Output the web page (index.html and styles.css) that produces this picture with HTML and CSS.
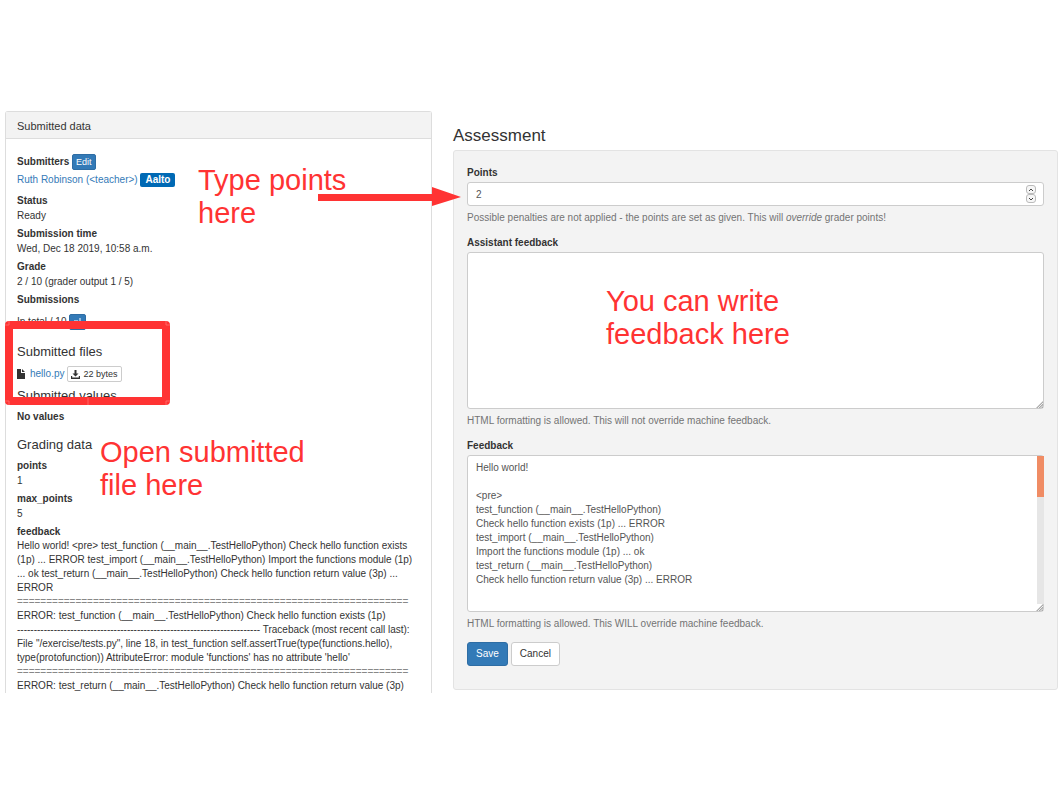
FILE: index.html
```html
<!DOCTYPE html>
<html lang="en">
<head>
<meta charset="utf-8">
<title>Assess submission</title>
<link rel="stylesheet" href="styles.css">
</head>
<body>
<div class="page">
  <section class="panel">
    <h2 class="panel-heading">Submitted data</h2>
    <div class="panel-body">
      <dl class="facts">
        <dt class="with-button">Submitters <button type="button" class="btn primary tiny">Edit</button></dt>
        <dd class="submitter"><a href="#user">Ruth Robinson (&lt;teacher&gt;)</a> <span class="tag">Aalto</span></dd>
        <dt>Status</dt>
        <dd>Ready</dd>
        <dt>Submission time</dt>
        <dd>Wed, Dec 18 2019, 10:58 a.m.</dd>
        <dt>Grade</dt>
        <dd>2 / 10 (grader output 1 / 5)</dd>
        <dt>Submissions</dt>
        <dd class="total">In total / 10 <button type="button" class="btn primary tiny" aria-label="Show submissions"><svg width="9" height="9" viewBox="0 0 9 9"><path d="M1 5h4M7 2v6M5.500 6.500 7 8l1.500-1.500" fill="none" stroke="#fff"/></svg></button></dd>
      </dl>
      <h3 class="section-title">Submitted files</h3>
      <p class="file">
        <svg class="file-icon" width="8" height="10" viewBox="0 0 8 10"><path d="M0 0h4v4h4v6H0zM5 0l3 3H5z" fill="#333"/></svg>
        <a href="#hello">hello.py</a>
        <button type="button" class="btn tiny download"><svg width="9" height="9" viewBox="0 0 9 9"><path d="M3.500 0h2v3.500h2L4.500 6.500l-3-3h2zM0 6h1.200v1.500h6.600V6H9v3H0z" fill="#333"/></svg>22 bytes</button>
      </p>
      <h3 class="section-title">Submitted values</h3>
      <p class="none">No values</p>
      <h3 class="section-title grading">Grading data</h3>
      <dl class="facts">
        <dt>points</dt>
        <dd>1</dd>
        <dt>max_points</dt>
        <dd>5</dd>
        <dt>feedback</dt>
        <dd class="log">Hello world! &lt;pre&gt; test_function (__main__.TestHelloPython) Check hello function exists<br>(1p) ... ERROR test_import (__main__.TestHelloPython) Import the functions module (1p)<br>... ok test_return (__main__.TestHelloPython) Check hello function return value (3p) ...<br>ERROR<br><span class="rule">===================================================================</span><br>ERROR: test_function (__main__.TestHelloPython) Check hello function exists (1p)<br>------------------------------------------------------------------------- Traceback (most recent call last):<br>File "/exercise/tests.py", line 18, in test_function self.assertTrue(type(functions.hello),<br>type(protofunction)) AttributeError: module 'functions' has no attribute 'hello'<br><span class="rule">===================================================================</span><br>ERROR: test_return (__main__.TestHelloPython) Check hello function return value (3p)</dd>
      </dl>
    </div>
  </section>

  <section class="assessment">
    <h1 class="title">Assessment</h1>
    <form class="well">
      <label for="points">Points</label>
      <div class="control">
        <input id="points" class="field" type="text" inputmode="numeric" value="2">
        <div class="spinner">
          <button type="button" aria-label="Increase"><svg width="6" height="4" viewBox="0 0 6 4"><path d="M1 3l2-2 2 2" fill="none" stroke="#444"/></svg></button>
          <button type="button" aria-label="Decrease"><svg width="6" height="4" viewBox="0 0 6 4"><path d="M1 1l2 2 2-2" fill="none" stroke="#444"/></svg></button>
        </div>
      </div>
      <p class="help">Possible penalties are not applied - the points are set as given. This will <em>override</em> grader points!</p>
      <label for="assistant">Assistant feedback</label>
      <div class="control">
        <textarea id="assistant" class="field area"></textarea>
        <svg class="grip" width="7" height="7" viewBox="0 0 7 7"><path d="M7 0v7H0z" fill="#aaa"/><path d="M2 7l5-5M4.500 7 7 4.500" stroke="#eee"/></svg>
      </div>
      <p class="help">HTML formatting is allowed. This will not override machine feedback.</p>
      <label for="feedback">Feedback</label>
      <div class="control">
        <textarea id="feedback" class="field area">Hello world!

&lt;pre&gt;
test_function (__main__.TestHelloPython)
Check hello function exists (1p) ... ERROR
test_import (__main__.TestHelloPython)
Import the functions module (1p) ... ok
test_return (__main__.TestHelloPython)
Check hello function return value (3p) ... ERROR</textarea>
        <div class="scrollbar"><div class="thumb"></div></div>
        <svg class="grip" width="7" height="7" viewBox="0 0 7 7"><path d="M7 0v7H0z" fill="#aaa"/><path d="M2 7l5-5M4.500 7 7 4.500" stroke="#eee"/></svg>
      </div>
      <p class="help">HTML formatting is allowed. This WILL override machine feedback.</p>
      <div class="actions">
        <button type="submit" class="btn primary">Save</button>
        <button type="button" class="btn">Cancel</button>
      </div>
    </form>
  </section>

  <p class="note note-points">Type points<br>here</p>
  <p class="note note-file">Open submitted<br>file here</p>
  <p class="note note-feedback">You can write<br>feedback here</p>
  <svg class="arrow" width="143" height="20" viewBox="0 0 143 20"><path d="M0 7h114V0l29 10-29 9v-5H0z" fill="#f33"/></svg>
  <svg class="frame" width="166" height="85" viewBox="0 0 166 85">
    <rect x="4" y="4" width="157" height="76" fill="none" stroke="#f33" stroke-width="8" stroke-linejoin="round"/>
    <path d="M0 4h4V0M161 0v4h4M0 80h4v4M161 84v-4h4M83 77v7" fill="none" stroke="#f66" stroke-width="1"/>
  </svg>
</div>
</body>
</html>
```
FILE: styles.css
```css
* { box-sizing: border-box; }
body {
  margin: 0;
  background: #fff;
  color: #333;
  font: 10px/14px "Liberation Sans", Arial, sans-serif;
}
h1, h2, h3, p, dl, dd { margin: 0; font-weight: 400; }
a { color: #337ab7; text-decoration: none; }
button, input, textarea { font: inherit; }

.page {
  position: relative;
  display: grid;
  grid-template-columns: 427fr 605fr;
  column-gap: 21px;
  align-items: start;
  padding: 111px 0 0 5px;
  overflow: hidden;
}

.panel {
  border: 1px solid #ddd;
  border-bottom: 0;
  border-radius: 3px 3px 0 0;
}
.panel-heading {
  padding: 7px 11px 5px;
  border-bottom: 1px solid #ddd;
  background: #f3f3f3;
  font-size: 11px;
  line-height: 14px;
}
.panel-body { padding: 15px 0 0 11px; }

.facts dt { font-weight: 700; line-height: 14px; }
.facts dd { line-height: 15px; margin-bottom: 4px; }
.facts .with-button, .facts .submitter { line-height: 16px; }
.facts .with-button { margin-bottom: 2px; }
.facts .submitter { margin-bottom: 6px; }
.facts .total { padding-top: 7px; margin-bottom: 14px; }
.facts .log { line-height: 14px; margin-bottom: 0; white-space: nowrap; }
.rule { color: #888; }
.tag {
  display: inline-block;
  padding: 0 5px;
  border-radius: 2px;
  background: #0069b4;
  color: #fff;
  font-weight: 700;
  line-height: 14px;
}

.section-title { font-size: 13px; line-height: 16px; }
.file { display: flex; align-items: center; padding: 6px 0; line-height: 14px; }
.file-icon { margin-right: 5px; }
.none { padding-top: 6px; font-weight: 700; }
.grading { padding: 13px 0 6px; }

.btn {
  padding: 4px 8px;
  border: 1px solid #ccc;
  border-radius: 3px;
  background: #fff;
  color: #333;
  line-height: 14px;
}
.primary { border-color: #2e6da4; background: #337ab7; color: #fff; }
.tiny { padding: 0 3px; border-radius: 2px; font-size: 9px; font-weight: 400; line-height: 14px; }
.download { display: flex; align-items: center; gap: 3px; margin-left: 3px; }

.assessment { min-width: 0; }
.title { padding: 15px 0 4px; font-size: 17px; line-height: 20px; }
.well {
  padding: 15px 13px 23px;
  border: 1px solid #e3e3e3;
  border-radius: 3px;
  background: #f3f3f3;
}
.well label { display: block; margin-bottom: 2px; font-weight: 700; line-height: 14px; }
.field {
  display: block;
  width: 100%;
  padding: 5px 8px 3px;
  border: 1px solid #ccc;
  border-radius: 3px;
  background: #fff;
  color: #555;
  line-height: 14px;
  outline: 0;
}
.control { position: relative; margin-bottom: 5px; }
.spinner {
  position: absolute;
  top: 3px;
  right: 8px;
  display: flex;
  flex-direction: column;
}
.spinner button {
  display: flex;
  align-items: center;
  justify-content: center;
  width: 10px;
  height: 9px;
  padding: 0;
  border: 1px solid #bbb;
  border-radius: 3px;
  background: #f6f6f6;
}
.area { height: 157px; resize: none; }
.scrollbar {
  position: absolute;
  top: 1px;
  right: 0;
  bottom: 8px;
  width: 7px;
  background: #e6e6e6;
}
.thumb { height: 28%; background: #f08c64; }
.grip { position: absolute; right: 1px; bottom: 1px; }
.help { padding-bottom: 11px; color: #737373; }
.actions { display: flex; gap: 3px; }

.note {
  position: absolute;
  color: #f33;
  font-size: 29px;
  line-height: 33px;
  white-space: nowrap;
}
.note-points { left: 198px; top: 164px; }
.note-file { left: 100px; top: 436px; }
.note-feedback { left: 606px; top: 285px; }
.arrow { position: absolute; left: 318px; top: 187px; }
.frame { position: absolute; left: 5px; top: 321px; }
```
